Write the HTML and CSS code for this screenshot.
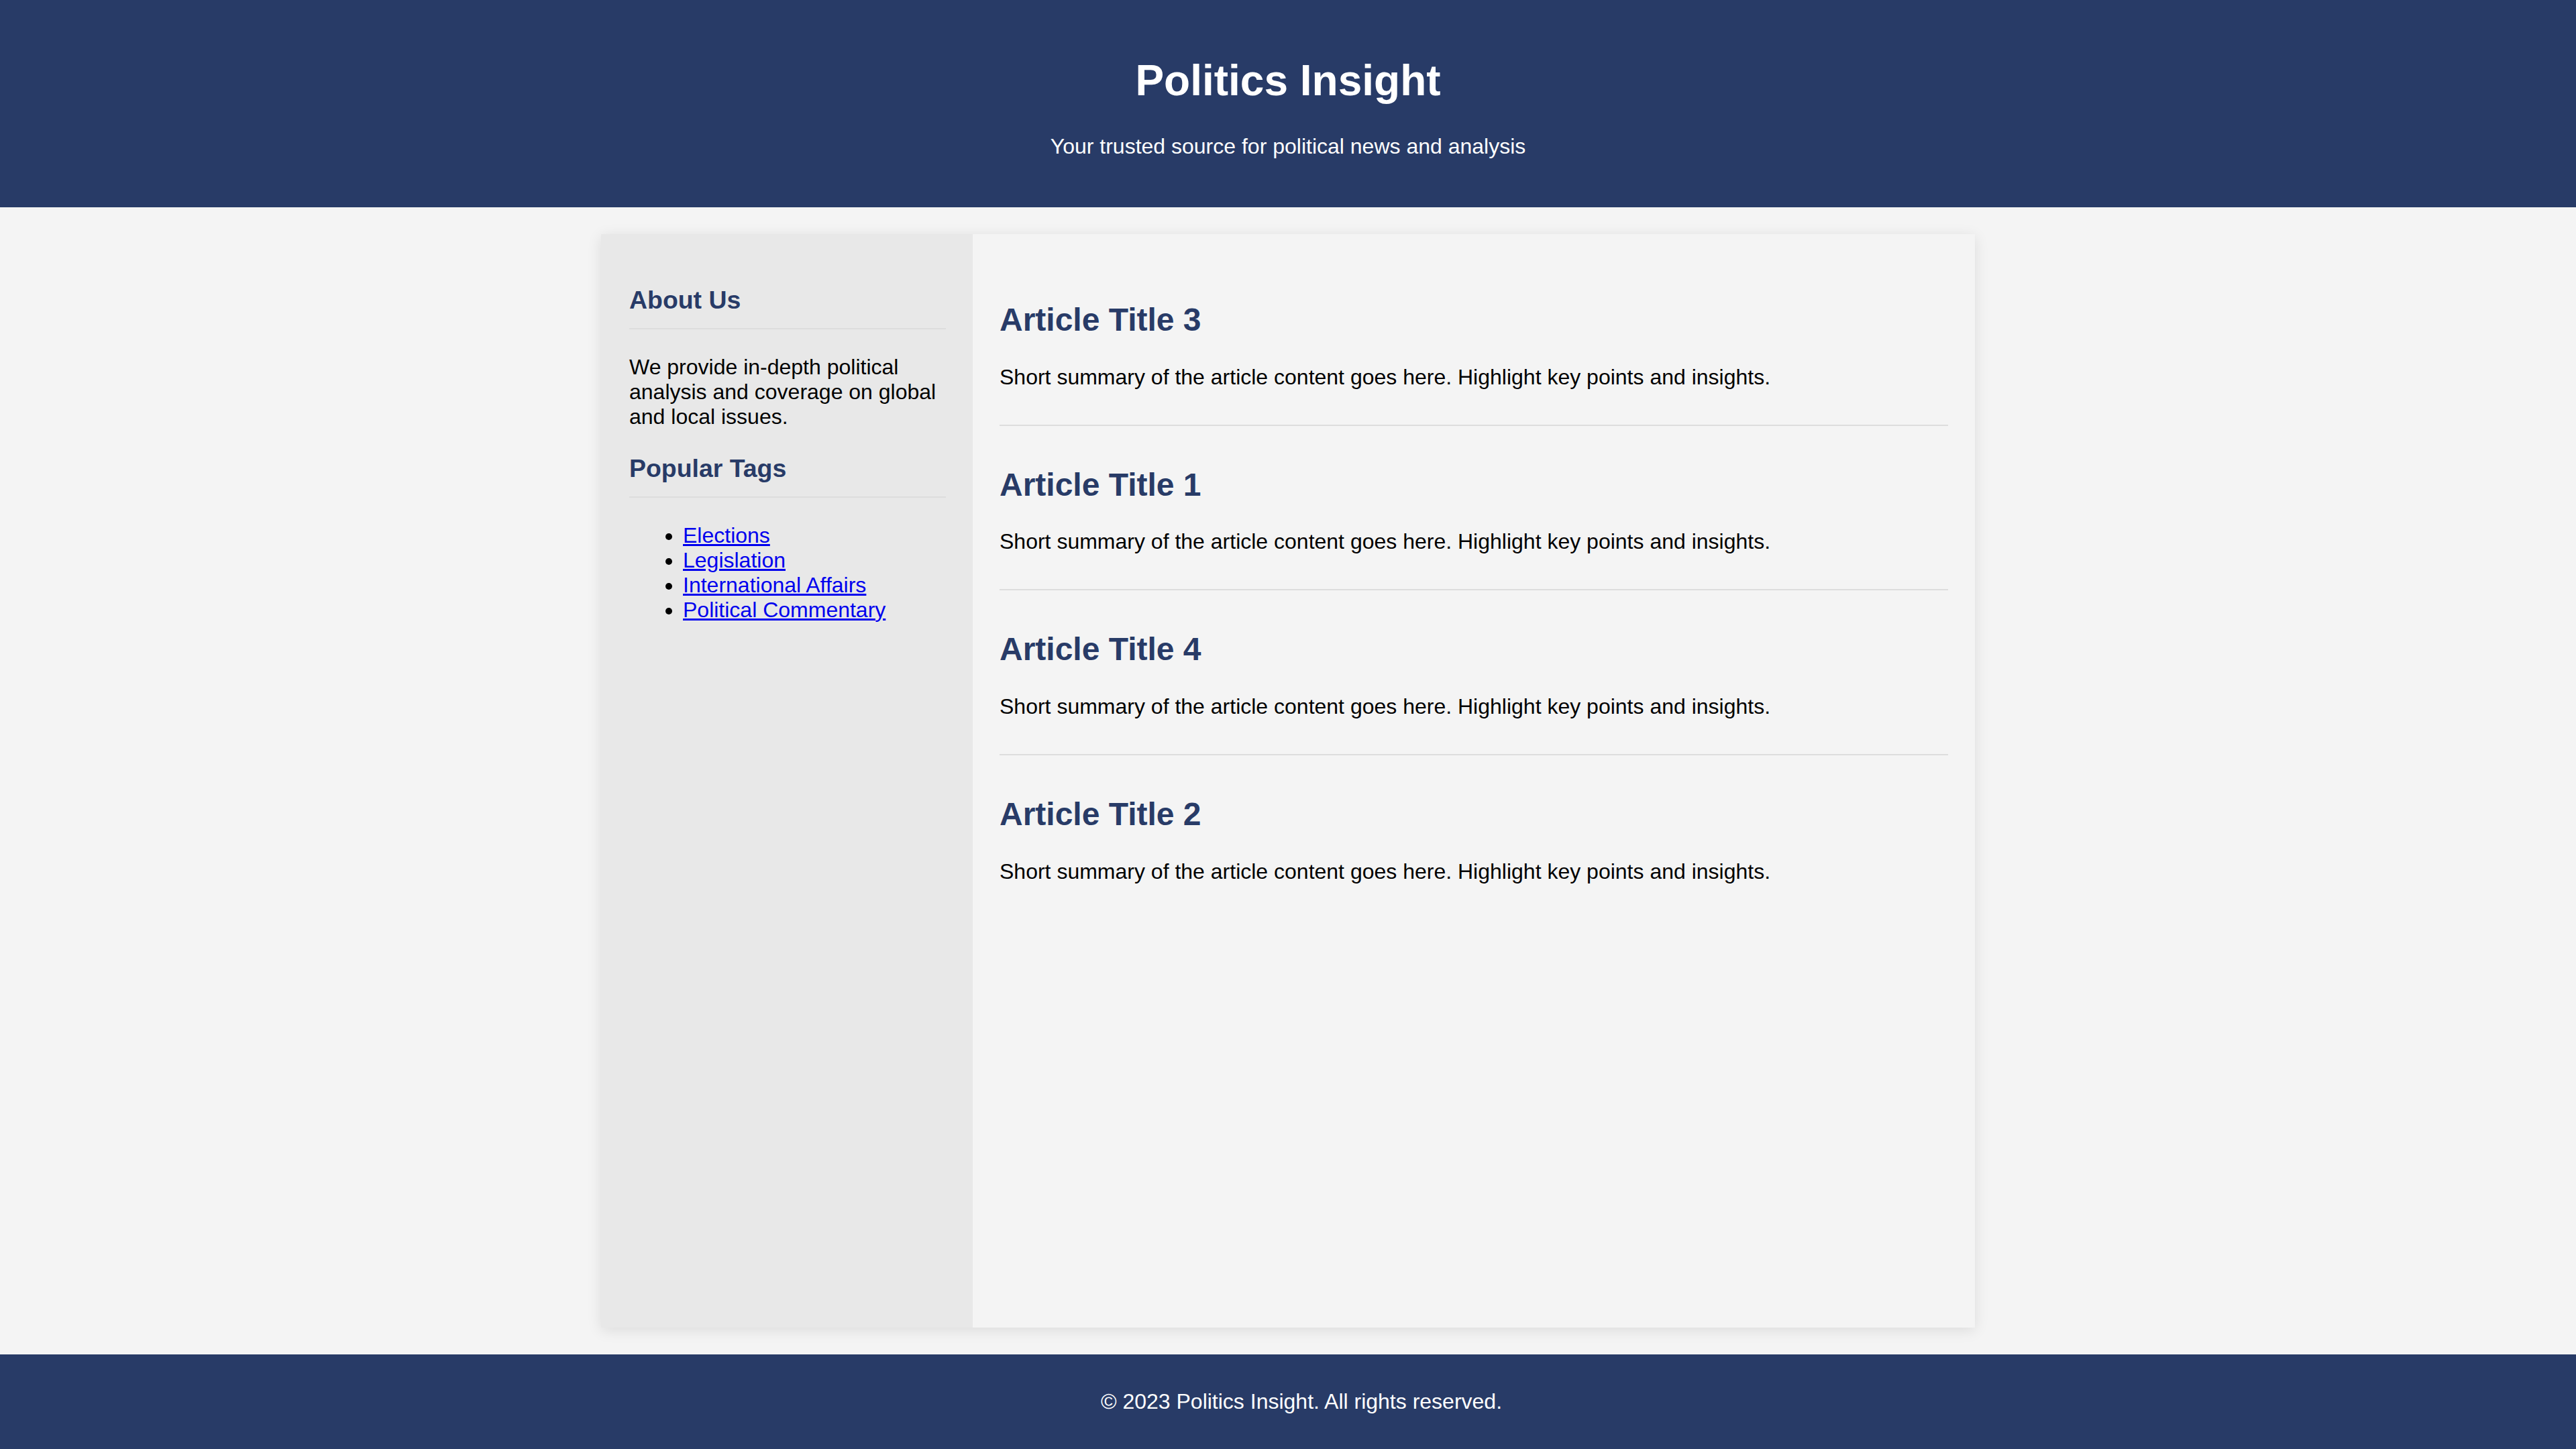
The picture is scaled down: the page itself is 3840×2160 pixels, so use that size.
FILE: index.html
```html
<!DOCTYPE html>
<html lang="en">
<head>
<meta charset="utf-8">
<title>Politics Insight</title>
<link rel="stylesheet" href="styles.css">
</head>
<body>
<header class="site-header">
  <h1 class="site-title">Politics Insight</h1>
  <p class="site-tagline">Your trusted source for political news and analysis</p>
</header>
<div class="container">
  <aside class="sidebar">
    <h3 class="side-heading">About Us</h3>
    <p class="side-text">We provide in-depth political analysis and coverage on global and local issues.</p>
    <h3 class="side-heading">Popular Tags</h3>
    <ul class="tag-list">
      <li><a href="#">Elections</a></li>
      <li><a href="#">Legislation</a></li>
      <li><a href="#">International Affairs</a></li>
      <li><a href="#">Political Commentary</a></li>
    </ul>
  </aside>
  <main class="content">
    <article class="article">
      <h2 class="article-title">Article Title 3</h2>
      <p class="article-summary">Short summary of the article content goes here. Highlight key points and insights.</p>
    </article>
    <article class="article">
      <h2 class="article-title">Article Title 1</h2>
      <p class="article-summary">Short summary of the article content goes here. Highlight key points and insights.</p>
    </article>
    <article class="article">
      <h2 class="article-title">Article Title 4</h2>
      <p class="article-summary">Short summary of the article content goes here. Highlight key points and insights.</p>
    </article>
    <article class="article">
      <h2 class="article-title">Article Title 2</h2>
      <p class="article-summary">Short summary of the article content goes here. Highlight key points and insights.</p>
    </article>
  </main>
</div>
<footer class="site-footer">
  <p class="footer-text">&copy; 2023 Politics Insight. All rights reserved.</p>
</footer>
</body>
</html>
```

FILE: styles.css
```css
html, body {
  margin: 0;
  padding: 0;
}

body {
  font-family: "Liberation Sans", Arial, Helvetica, sans-serif;
  font-size: 32px;
  color: #000;
  background: #f4f4f4;
  min-height: 100vh;
  display: flex;
  flex-direction: column;
}

.site-header {
  background: #283b67;
  color: #fff;
  text-align: center;
  padding: 40px;
}

.site-title {
  font-size: 64px;
  font-weight: bold;
  margin: 42.88px 0;
}

.site-tagline {
  margin: 32px 0;
  font-size: 32px;
}

.container {
  flex: 1;
  display: flex;
  width: 2048px;
  margin: 40px auto;
  box-shadow: 0 4px 20px rgba(0, 0, 0, 0.1);
}

.sidebar {
  flex: 0 0 472px;
  background: #e8e8e8;
  padding: 40px 40px 40px 42px;
}

.side-heading {
  font-size: 37.44px;
  color: #283b67;
  margin: 37.44px 0;
  padding-bottom: 20px;
  border-bottom: 2px solid #dddddd;
}

.side-text {
  margin: 32px 0;
}

.tag-list {
  margin: 32px 0;
  padding-left: 80px;
}

.tag-list a {
  color: #0000ee;
}

.content {
  flex: 1;
  background: #f4f4f4;
  padding: 40px;
}

.article {
  padding-bottom: 20px;
  margin-bottom: 40px;
  border-bottom: 2px solid #dddddd;
}

.article:last-child {
  border-bottom: none;
}

.article-title {
  font-size: 48px;
  color: #283b67;
  margin: 60px 0 39.84px;
}

.article-summary {
  margin: 32px 0;
}

.site-footer {
  background: #283b67;
  color: #fff;
  text-align: center;
  padding: 20px 0 20px 40px;
}

.footer-text {
  margin: 32px 0;
}
```
